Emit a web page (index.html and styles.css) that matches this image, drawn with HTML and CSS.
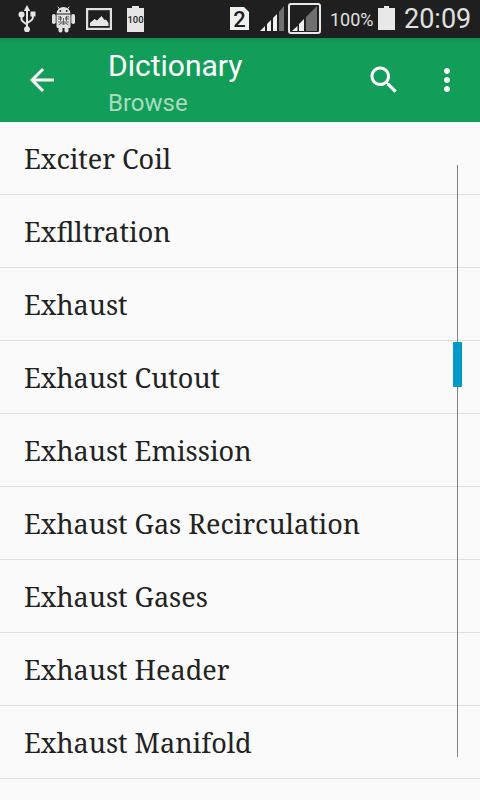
FILE: index.html
```html
<!DOCTYPE html>
<html lang="en">
<head>
    <meta charset="UTF-8">
    <meta name="viewport" content="width=device-width, initial-scale=1.0">
    <title>Dictionary - Browse</title>
    <link rel="stylesheet" href="styles.css">
</head>
<body>
    <div class="status-bar">
        <div class="status-left">
            <svg width="18" height="28" viewBox="0 0 18 28">
                <g fill="none" stroke="#e6e6e6" stroke-width="2">
                    <path d="M9 4v20M3.500 10v4.500q0 1.500 5.500 5M14.800 8v5q0 2-5.800 5"/>
                </g>
                <path d="M9 0l3.200 6H5.800zM12.500 6.500h5v5h-5z" fill="#e6e6e6"/>
                <circle cx="3.500" cy="9.500" r="3" fill="#e6e6e6"/>
                <circle cx="9" cy="24.200" r="2.900" fill="#e6e6e6"/>
            </svg>
            <svg class="android" width="23" height="27" viewBox="0 0 23 27">
                <g fill="#e0e0e0">
                    <path d="M4.500 7.500a7 6.500 0 0 1 14 0zM4.500 8.500h14v12a1.500 1.500 0 0 1-1.500 1.500H6a1.500 1.500 0 0 1-1.500-1.500z"/>
                    <rect x="0" y="8" width="3.700" height="10" rx="1.800"/>
                    <rect x="19.300" y="8" width="3.700" height="10" rx="1.800"/>
                    <rect x="6.500" y="20" width="4" height="6.500" rx="1.800"/>
                    <rect x="12.500" y="20" width="4" height="6.500" rx="1.800"/>
                </g>
                <path d="M7.500 3L5.800 0.700M15.500 3L17.200 0.700" stroke="#e0e0e0"/>
                <circle cx="8.300" cy="5" r="0.900" fill="#1f1f1f"/>
                <circle cx="14.700" cy="5" r="0.900" fill="#1f1f1f"/>
                <path d="M6 10.500l4 1.500M17 10.500l-4 1.500M6 13h4M13 13h4M6 16h11M6.500 19l3-2 2 2 2-2 3 2M8.500 10v5M14.500 10v5M11.500 12v6" fill="none" stroke="#555" stroke-width="0.900"/>
            </svg>
            <svg class="picture" width="26" height="22" viewBox="0 0 26 22">
                <rect x="1.100" y="1.100" width="23.800" height="19.800" fill="none" stroke="#e0e0e0" stroke-width="2.200"/>
                <path d="M4 18v-3l4.500-4 2.500 1.500L15.500 8l3 4 1.500-.5L22.500 15v3z" fill="#e6e6e6"/>
            </svg>
            <div class="battery-level">100</div>
        </div>
        <div class="status-right">
            <div class="sim">2</div>
            <svg class="signal" width="24" height="25" viewBox="0 0 24 25">
                <path d="M0 25l5-5v5zM7 25v-7l4-4v11zM13 25V12l4-4v17z" fill="#f0f0f0"/>
                <path d="M19 25V6l5-6v25z" fill="#707070"/>
            </svg>
            <svg class="signal-box" width="33" height="31" viewBox="0 0 33 31">
                <rect x="1" y="1" width="31" height="29" rx="2" fill="none" stroke="#e8e8e8" stroke-width="2"/>
                <path d="M4 28l5.500-5v5zM11 28v-7l5-5v12z" fill="#f0f0f0"/>
                <path d="M18 28V14L29 3v25z" fill="#707070"/>
            </svg>
            <span class="percent">100%</span>
            <svg class="battery" width="17" height="24" viewBox="0 0 17 24">
                <path d="M0 2h6V0h5v2h6v22H0z" fill="#e8e8e8"/>
            </svg>
            <span class="clock">20:09</span>
        </div>
    </div>

    <header class="toolbar">
        <svg class="back" width="36" height="36" viewBox="0 0 24 24">
            <path d="M20 11H7.830l5.590-5.590L12 4l-8 8 8 8 1.410-1.410L7.830 13H20v-2z" fill="#fff"/>
        </svg>
        <div class="titles">
            <h1>Dictionary</h1>
            <p>Browse</p>
        </div>
        <svg class="search" width="36" height="36" viewBox="0 0 24 24">
            <path d="M15.500 14h-.79l-.28-.27C15.410 12.590 16 11.110 16 9.500 16 5.910 13.090 3 9.500 3S3 5.910 3 9.500 5.910 16 9.500 16c1.610 0 3.090-.59 4.230-1.570l.27.28v.79l5 4.990L20.490 19l-4.990-5zm-6 0C7.010 14 5 11.990 5 9.500S7.010 5 9.500 5 14 7.010 14 9.500 11.990 14 9.500 14z" fill="#fff"/>
        </svg>
        <svg class="more" width="36" height="36" viewBox="0 0 24 24">
            <path d="M12 8c1.100 0 2-.9 2-2s-.9-2-2-2-2 .9-2 2 .9 2 2 2zm0 2c-1.100 0-2 .9-2 2s.9 2 2 2 2-.9 2-2-.9-2-2-2zm0 6c-1.100 0-2 .9-2 2s.9 2 2 2 2-.9 2-2-.9-2-2-2z" fill="#fff"/>
        </svg>
    </header>

    <main>
        <ul class="word-list">
            <li>Exciter Coil</li>
            <li>Exflltration</li>
            <li>Exhaust</li>
            <li>Exhaust Cutout</li>
            <li>Exhaust Emission</li>
            <li>Exhaust Gas Recirculation</li>
            <li>Exhaust Gases</li>
            <li>Exhaust Header</li>
            <li>Exhaust Manifold</li>
        </ul>
        <div class="scroll-track">
            <div class="scroll-thumb"></div>
        </div>
    </main>
</body>
</html>
```
FILE: styles.css
```css
* {
    margin: 0;
    padding: 0;
    box-sizing: border-box;
}
body {
    width: 480px;
    height: 800px;
    overflow: hidden;
    background-color: #fafafa;
    font-family: Roboto, sans-serif;
}
svg {
    display: block;
    flex-shrink: 0;
}

/* status bar */
.status-bar {
    display: flex;
    justify-content: space-between;
    height: 38px;
    padding: 0 9px 0 18px;
    background-color: #1f1f1f;
    color: #e0e0e0;
}
.status-left, .status-right {
    display: flex;
    align-items: center;
}
.android {
    margin-left: 16px;
}
.picture {
    margin-left: 11px;
}
.battery-level {
    width: 17px;
    height: 26px;
    margin-left: 15px;
    padding-top: 3px;
    background-color: #e6e6e6;
    clip-path: polygon(0 2px, 5px 2px, 5px 0, 12px 0, 12px 2px, 100% 2px, 100% 100%, 0 100%);
    color: #1f1f1f;
    font-size: 9.5px;
    font-weight: 500;
    line-height: 22px;
    text-align: center;
}
.sim {
    width: 19px;
    height: 23px;
    margin-bottom: 1px;
    background-color: #f0f0f0;
    clip-path: polygon(0 0, 14px 0, 100% 5px, 100% 100%, 0 100%);
    color: #1f1f1f;
    font-size: 22px;
    font-weight: 500;
    line-height: 25px;
    text-align: center;
}
.signal {
    margin: 0 0 2px 11px;
}
.signal-box {
    margin: 0 0 1px 4px;
}
.percent {
    width: 43px;
    margin-left: 9px;
    padding-top: 1px;
    font-size: 18px;
}
.battery {
    margin: 0 0 2px 5px;
}
.clock {
    width: 67px;
    margin-left: 9px;
    font-size: 27px;
    line-height: 38px;
}

/* toolbar */
.toolbar {
    display: flex;
    align-items: center;
    height: 84px;
    padding: 0 15px 0 24px;
    background: linear-gradient(#12904f, #129e58 6px);
    color: #fff;
}
.titles {
    flex: 1;
    margin-left: 48px;
    padding-top: 8px;
}
h1 {
    font-size: 30px;
    font-weight: normal;
    line-height: 38px;
}
.titles p {
    color: #a9dabf;
    font-size: 24px;
    line-height: 36px;
}
.more {
    margin-left: 27px;
}

/* word list */
main {
    position: relative;
    height: 678px;
}
.word-list {
    list-style: none;
}
.word-list li {
    height: 73px;
    padding-left: 24px;
    border-bottom: 1px solid #dedede;
    color: #222;
    font-family: "Noto Serif", "DejaVu Serif Condensed", "DejaVu Serif", serif;
    font-size: 27px;
    font-stretch: condensed;
    line-height: 73px;
}
.scroll-track {
    position: absolute;
    top: 43px;
    right: 22px;
    width: 1px;
    height: 592px;
    background-color: #808080;
}
.scroll-thumb {
    position: absolute;
    top: 177px;
    left: -4px;
    width: 9px;
    height: 45px;
    border-radius: 1px;
    background-color: #0099cc;
}
```
